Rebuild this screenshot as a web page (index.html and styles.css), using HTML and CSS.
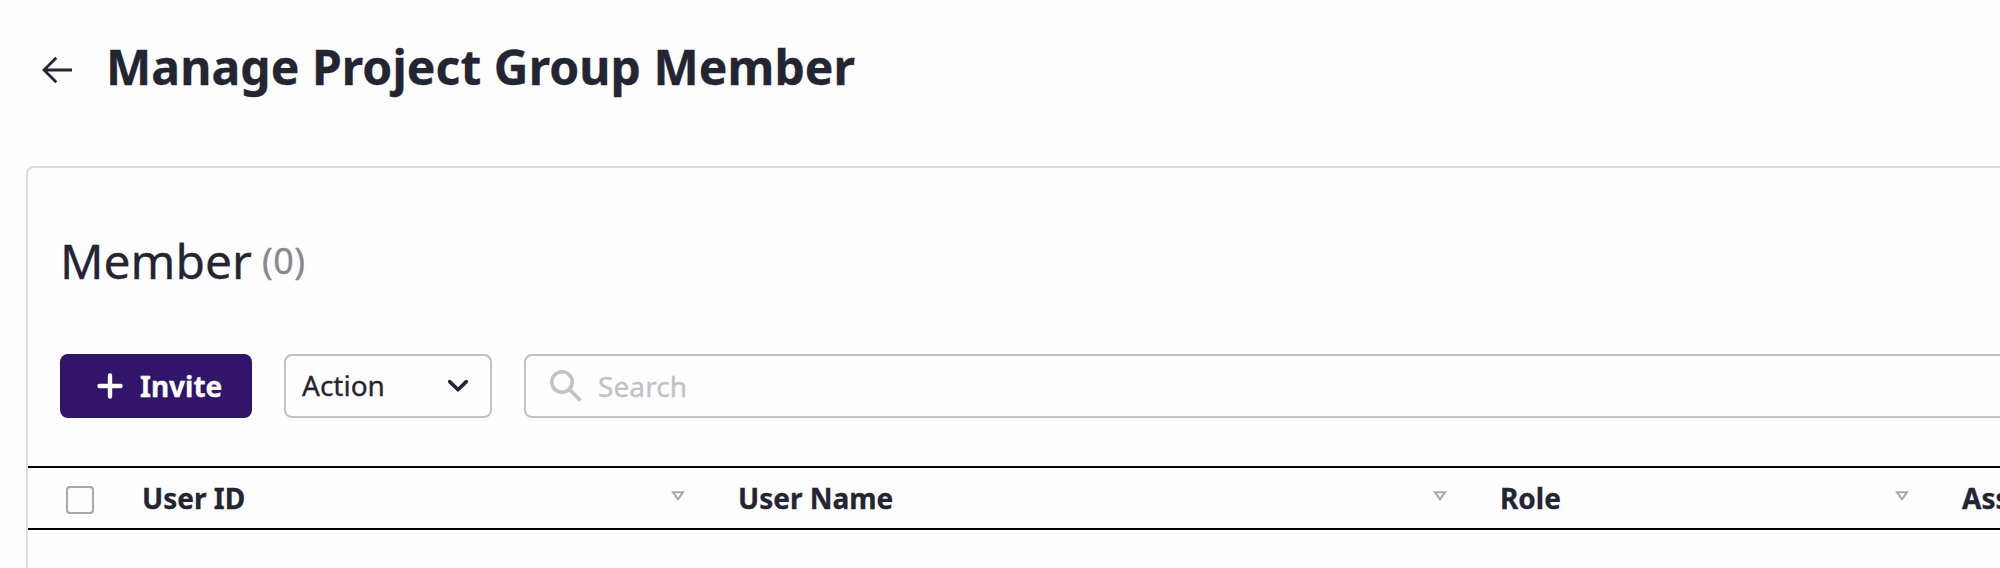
FILE: index.html
```html
<!DOCTYPE html>
<html lang="en">
<head>
<meta charset="utf-8">
<title>Manage Project Group Member</title>
<link rel="stylesheet" href="styles.css">
</head>
<body>
<div class="page">
  <header class="page-header">
    <svg class="back-icon" width="32" height="28" viewBox="0 0 32 28" fill="none" stroke="#232533" stroke-width="2.8"><path d="M31 14H3M15.3 1.8L3 14l12.3 12.2"/></svg>
    <h1 class="page-title">Manage Project Group Member</h1>
  </header>
  <main class="card">
    <h2 class="card-title">Member <span class="count">(0)</span></h2>
    <div class="toolbar">
      <button class="invite"><svg width="26" height="26" viewBox="0 0 26 26" stroke="#fff" stroke-width="4.4" stroke-linecap="round"><path d="M13 2.5v21M2.5 13h21"/></svg><span>Invite</span></button>
      <div class="select"><span class="select-value">Action</span><svg width="22" height="14" viewBox="0 0 22 14" fill="none" stroke="#232533" stroke-width="3.6" stroke-linecap="round" stroke-linejoin="round"><path d="M2.7 2.6L11 10.7l8.3-8.1"/></svg></div>
      <div class="search"><svg width="32" height="32" viewBox="0 0 32 32" fill="none" stroke="#c1c1c6"><circle cx="12" cy="12" r="10.2" stroke-width="3.6"/><path d="M19.5 19.5L30.5 30.5" stroke-width="3.8"/></svg><span>Search</span></div>
    </div>
    <div class="table-head">
      <span class="checkbox"></span>
      <div class="cell user-id">User ID<svg class="sort" viewBox="0 0 14 10"><path d="M2 1.2h10L7 8.3z"/></svg></div>
      <div class="cell user-name">User Name<svg class="sort" viewBox="0 0 14 10"><path d="M2 1.2h10L7 8.3z"/></svg></div>
      <div class="cell role">Role<svg class="sort" viewBox="0 0 14 10"><path d="M2 1.2h10L7 8.3z"/></svg></div>
      <div class="cell assigned">Ass</div>
    </div>
  </main>
</div>
</body>
</html>
```
FILE: styles.css
```css
* { box-sizing: border-box; }
body {
  margin: 0;
  background: #fefefe;
  color: #232533;
  font-family: "Noto Sans", sans-serif;
  font-size: 28px;
  -webkit-text-stroke: 0.3px;
  overflow: hidden;
}
svg { display: block; flex: none; }
.page { height: 568px; display: flex; flex-direction: column; overflow: hidden; }
.page-header { display: flex; align-items: center; height: 132px; padding-left: 41px; flex: none; }
.back-icon { margin-top: 8px; }
.page-title { margin: 2px 0 0 33px; font-size: 48px; line-height: 64px; font-weight: 700; letter-spacing: 0.07px; }
.card {
  flex: none;
  height: 440px;
  margin: 34px -40px 0 26px;
  padding-top: 61px;
  border: 2px solid #dcdddd;
  border-radius: 8px;
}
.card-title {
  display: flex;
  align-items: center;
  gap: 10px;
  height: 64px;
  margin: 0 0 61px 32px;
  font-size: 48px;
  line-height: 64px;
  font-weight: 400;
}
.count { font-size: 36px; letter-spacing: 0.5px; color: #898794; }
.toolbar { display: flex; gap: 32px; height: 64px; padding-left: 32px; }
.invite {
  display: flex;
  align-items: center;
  gap: 17px;
  width: 192px;
  padding: 0 0 0 37px;
  border: 0;
  border-radius: 8px;
  background: #30156a;
  color: #fff;
  font: 700 28px "Noto Sans", sans-serif;
}
.select, .search {
  display: flex;
  align-items: center;
  border: 2px solid #c1c1c6;
  border-radius: 8px;
}
.select { justify-content: space-between; width: 208px; padding: 0 21px 0 16px; }
.select-value { margin-top: -2px; }
.search { flex: 1; gap: 16px; padding-left: 24px; color: #c1c1c6; letter-spacing: 0.1px; }
.table-head {
  display: flex;
  align-items: center;
  height: 64px;
  margin-top: 48px;
  padding-left: 38px;
  border: solid #000;
  border-width: 2px 0;
  font-weight: 700;
}
.checkbox { flex: none; width: 28px; height: 28px; margin: 3px 48px 0 0; border: 2px solid #a9a7b1; border-radius: 4px; }
.cell { flex: none; display: flex; align-items: center; justify-content: space-between; padding-right: 53px; }
.user-id { width: 596px; }
.user-name { width: 762px; }
.role { width: 462px; }
.sort { width: 14px; height: 10px; margin-top: -4px; fill: none; stroke: #a9a7b1; stroke-width: 2; }
```
